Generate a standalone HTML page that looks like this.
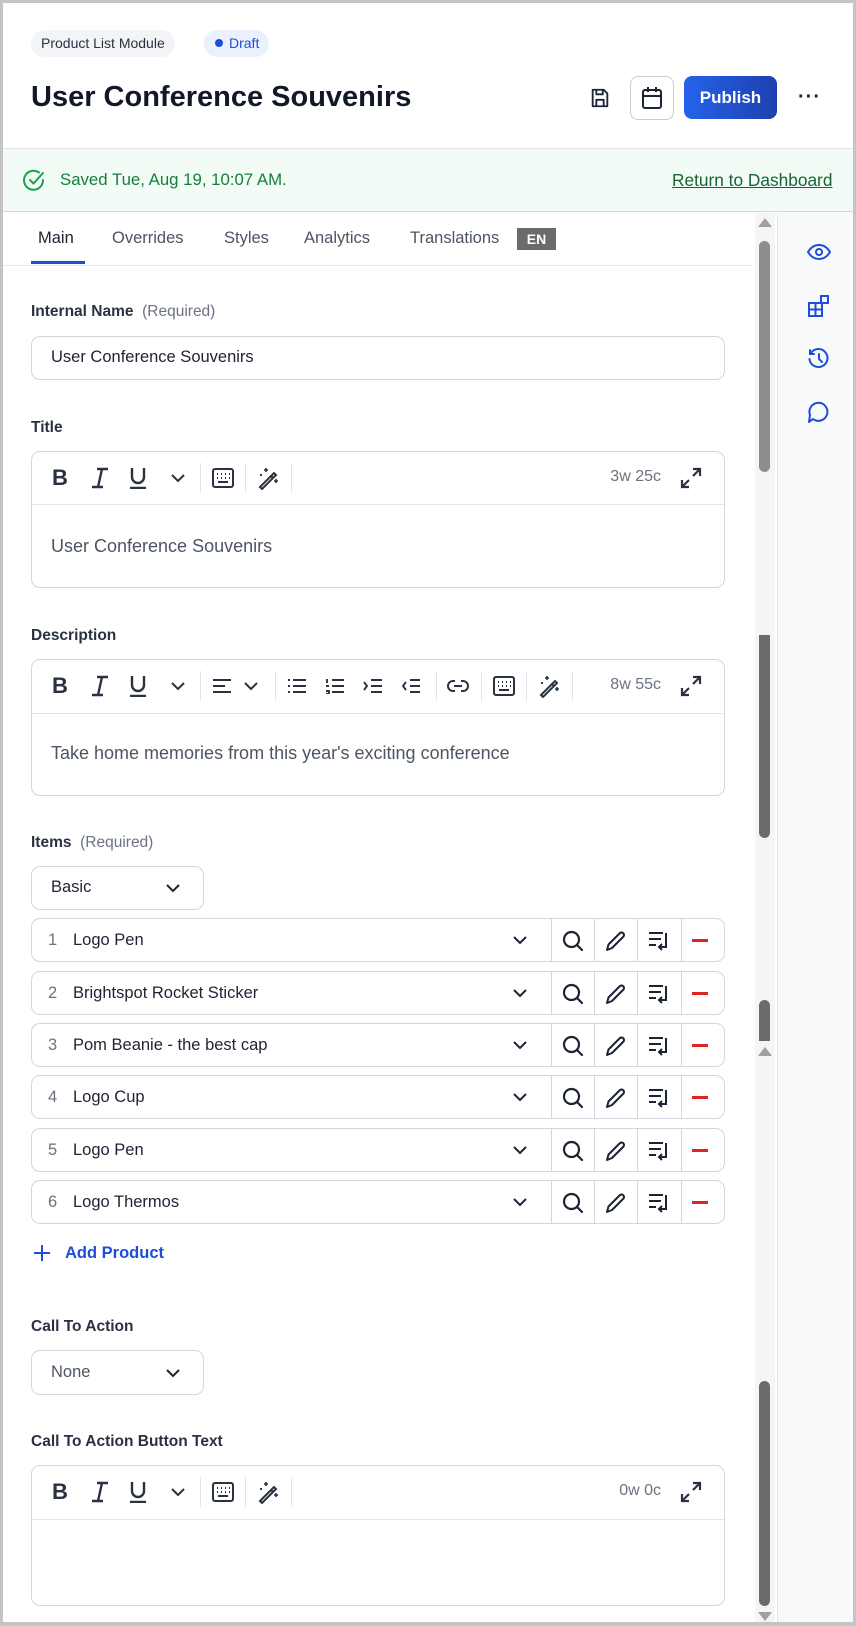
<!DOCTYPE html>
<html><head><meta charset="utf-8"><style>
*{box-sizing:border-box;margin:0;padding:0}
body{width:856px;height:1626px;overflow:hidden;font-family:"Liberation Sans",sans-serif;color:#1c2333;background:#fff;position:relative}
.frame{position:absolute;inset:0;border:3px solid #c4c4c4;border-bottom-width:4px;pointer-events:none;z-index:10}
.a{position:absolute}
.pill{position:absolute;top:30px;height:27px;border-radius:14px;font-size:14px;line-height:27px;padding:0 10px}
.lbl{position:absolute;left:31px;font-size:15.5px;font-weight:bold;color:#2a3242}
.lbl span{font-weight:normal;color:#6b7280}
.box{position:absolute;left:31px;width:694px;border:1px solid #d3d6de;border-radius:9px;background:#fff}
.tb{position:absolute;left:0;right:0;top:0;border-bottom:1px solid #e2e4ea}
.sep{position:absolute;width:1px;background:#e2e4ea}
.row{position:absolute;left:31px;width:694px;height:44px;border:1px solid #d3d6de;border-radius:9px}
.row .n{position:absolute;left:16px;top:12px;font-size:16.5px;color:#6b7280}
.row .t{position:absolute;left:41px;top:12px;font-size:16.5px}
.row .s{position:absolute;top:0;bottom:0;width:1px;background:#d3d6de}
.sb{position:absolute;left:759px;width:11px;border-radius:6px}
</style></head><body>
<div class="frame"></div>
<div class="pill" style="left:31px;background:#f3f4f7;color:#2a3242">Product List Module</div>
<div class="pill" style="left:204px;background:#eaf0fd;color:#1d4ed8;padding-left:11px"><span style="display:inline-block;width:8px;height:8px;border-radius:4px;background:#1d4ed8;margin-right:6px;vertical-align:1px"></span>Draft</div>
<div class="a" style="left:31px;top:81px;font-size:29px;font-weight:bold;color:#111827">User Conference Souvenirs</div>
<svg class="a" style="left:589px;top:87px" width="22" height="22" viewBox="0 0 24 24" fill="none" stroke="#1c2333" stroke-width="2" stroke-linejoin="round"><path d="M4 3h12l4 4v14H4z"/><path d="M8 3v5h7V3M8 21v-7h8v7"/></svg>
<div class="a" style="left:630px;top:76px;width:44px;height:44px;border:1px solid #c9ccd4;border-radius:8px"></div>
<svg class="a" style="left:641px;top:86px" width="22" height="24" viewBox="0 0 22 24" fill="none" stroke="#1c2333" stroke-width="2"><rect x="2" y="4" width="18" height="18" rx="2"/><path d="M2 10h18M7 1v5M15 1v5"/></svg>
<div class="a" style="left:684px;top:76px;width:93px;height:43px;border-radius:8px;background:linear-gradient(90deg,#2563eb,#1e40af);color:#fff;font-weight:bold;font-size:17px;text-align:center;line-height:43px">Publish</div>
<div class="a" style="left:798px;top:86px;font-size:20px;font-weight:bold;letter-spacing:1px">···</div>
<div class="a" style="left:3px;right:3px;top:148px;height:64px;background:#f2fbf6;border-top:1px solid #e3e6ea;border-bottom:1px solid #b8e6c8"></div>
<svg class="a" style="left:22px;top:169px" width="24" height="24" viewBox="0 0 24 24" fill="none" stroke="#16a34a" stroke-width="2" stroke-linecap="round"><path d="M21 11a9.5 9.5 0 1 1-4-7.5"/><path d="M8 11l3.5 3.5L21 4"/></svg>
<div class="a" style="left:60px;top:170px;font-size:16.8px;color:#15803d">Saved Tue, Aug 19, 10:07 AM.</div>
<div class="a" style="left:672px;top:170px;font-size:17.3px;color:#166534;text-decoration:underline">Return to Dashboard</div>
<div class="a" style="left:777px;top:213px;width:76px;height:1410px;background:#f8f9fb;border-left:1px solid #e5e7eb"></div>
<svg class="a" style="left:807px;top:242px" width="24" height="20" viewBox="0 0 24 20" fill="none" stroke="#1d4ed8" stroke-width="2"><path d="M1 10c3-5 7-7 11-7s8 2 11 7c-3 5-7 7-11 7S4 15 1 10z"/><circle cx="12" cy="10" r="3"/></svg>
<svg class="a" style="left:808px;top:295px" width="22" height="22" viewBox="0 0 22 22" fill="none" stroke="#1d4ed8" stroke-width="2"><rect x="1" y="8" width="13" height="13"/><path d="M7.5 8v13M1 14.5h13"/><rect x="13" y="1" width="7" height="7"/></svg>
<svg class="a" style="left:808px;top:348px" width="22" height="22" viewBox="0 0 22 22" fill="none" stroke="#1d4ed8" stroke-width="2" stroke-linecap="round"><path d="M3 5a9 9 0 1 1-1.5 6"/><path d="M2 2v4h4M11 6v5l3 3"/></svg>
<svg class="a" style="left:808px;top:401px" width="22" height="22" viewBox="0 0 22 22" fill="none" stroke="#1d4ed8" stroke-width="2" stroke-linejoin="round"><path d="M5 18a9 9 0 1 0-3-4l-1 7z"/></svg>
<div class="a" style="left:3px;top:265px;width:750px;height:1px;background:#e5e7eb"></div>
<div class="a" style="top:229px;left:38px;font-size:16.5px;color:#1c2333">Main</div>
<div class="a" style="left:31px;top:261px;width:54px;height:3px;background:#1d4ed8"></div>
<div class="a" style="top:229px;left:112px;font-size:16.5px;color:#4b5563">Overrides</div>
<div class="a" style="top:229px;left:224px;font-size:16.5px;color:#4b5563">Styles</div>
<div class="a" style="top:229px;left:304px;font-size:16.5px;color:#4b5563">Analytics</div>
<div class="a" style="top:229px;left:410px;font-size:16.5px;color:#4b5563">Translations</div>
<div class="a" style="top:228px;left:517px;width:39px;height:22px;background:#6b6b6b;color:#fff;font-size:14px;font-weight:bold;text-align:center;line-height:22px">EN</div>
<div class="a" style="left:755px;top:213px;width:20px;height:1410px;background:#f5f5f5"></div>
<div class="a" style="left:758px;top:218px;border:7px solid transparent;border-bottom:9px solid #a0a0a0;border-top:0"></div>
<div class="sb" style="top:241px;height:231px;background:#8d8d8d"></div>
<div class="sb" style="top:635px;height:203px;background:#6b6b6b;border-radius:0 0 6px 6px"></div>
<div class="sb" style="top:1000px;height:41px;background:#6b6b6b;border-radius:6px 6px 0 0"></div>
<div class="a" style="left:758px;top:1047px;border:7px solid transparent;border-bottom:9px solid #a0a0a0;border-top:0"></div>
<div class="sb" style="top:1381px;height:225px;background:#6b6b6b"></div>
<div class="a" style="left:758px;top:1612px;border:7px solid transparent;border-top:9px solid #a0a0a0;border-bottom:0"></div>

<div class="lbl" style="top:303px">Internal Name <span>&nbsp;(Required)</span></div>
<div class="box" style="top:336px;height:44px"><div class="a" style="left:19px;top:11px;font-size:16.5px">User Conference Souvenirs</div></div>

<div class="lbl" style="top:419px">Title</div>
<div class="box" style="top:451px;height:137px"><div class="tb" style="height:53px"></div>
<div class="a" style="left:19px;top:84px;font-size:18px;color:#4b5563">User Conference Souvenirs</div>
</div>

<div class="lbl" style="top:627px">Description</div>
<div class="box" style="top:659px;height:137px"><div class="tb" style="height:54px"></div>
<div class="a" style="left:19px;top:83px;font-size:18px;color:#4b5563">Take home memories from this year's exciting conference</div></div>

<div class="lbl" style="top:834px">Items <span>&nbsp;(Required)</span></div>
<div class="a" style="left:31px;top:866px;width:173px;height:44px;border:1px solid #d3d6de;border-radius:9px"><div class="a" style="left:19px;top:11px;font-size:16.5px">Basic</div><svg class="a" style="left:133px;top:15px" width="16" height="12" viewBox="0 0 16 12" fill="none" stroke="#1c2333" stroke-width="2"><path d="M2 3l6 6 6-6"/></svg></div>

<div class="lbl" style="top:1318px">Call To Action</div>
<div class="a" style="left:31px;top:1350px;width:173px;height:45px;border:1px solid #d3d6de;border-radius:9px"><div class="a" style="left:19px;top:12px;font-size:16.5px;color:#4b5563">None</div><svg class="a" style="left:133px;top:16px" width="16" height="12" viewBox="0 0 16 12" fill="none" stroke="#1c2333" stroke-width="2"><path d="M2 3l6 6 6-6"/></svg></div>

<div class="lbl" style="top:1433px">Call To Action Button Text</div>
<div class="box" style="top:1465px;height:141px"><div class="tb" style="height:54px"></div></div>

<div class="a" style="left:33px;top:1244px"><svg width="18" height="18" viewBox="0 0 18 18" stroke="#1d4ed8" stroke-width="2"><path d="M9 1v16M1 9h16"/></svg></div>
<div class="a" style="left:65px;top:1244px;font-size:16.5px;font-weight:bold;color:#1d4ed8">Add Product</div>

<script>
function tool(top,full,count){
 var h='';
 var y=top;
 h+='<div class="a" style="left:52px;top:'+(y-13)+'px;font-size:22px;font-weight:bold;color:#2a3242">B</div>';
 h+='<svg class="a" style="left:90px;top:'+(y-11)+'px" width="20" height="22" viewBox="0 0 20 22" fill="none" stroke="#2a3242" stroke-width="2.4"><path d="M7 2h11M2 20h11M12 2L8 20"/></svg>';
 h+='<svg class="a" style="left:128px;top:'+(y-11)+'px" width="20" height="22" viewBox="0 0 20 22" fill="none" stroke="#2a3242" stroke-width="2.4"><path d="M4 1v9a6 6 0 0 0 12 0V1M2 21h16"/></svg>';
 h+='<svg class="a" style="left:171px;top:'+(y-4)+'px" width="14" height="9" viewBox="0 0 14 9" fill="none" stroke="#2a3242" stroke-width="2"><path d="M1 1l6 6 6-6"/></svg>';
 var x=200;
 h+='<div class="sep" style="left:'+x+'px;top:'+(y-15)+'px;height:30px"></div>';
 x+=12;
 if(full){
  h+='<svg class="a" style="left:212px;top:'+(y-8)+'px" width="20" height="16" viewBox="0 0 20 16" fill="none" stroke="#2a3242" stroke-width="2"><path d="M1 2h18M1 8h12M1 14h18"/></svg>';
  h+='<svg class="a" style="left:244px;top:'+(y-4)+'px" width="14" height="9" viewBox="0 0 14 9" fill="none" stroke="#2a3242" stroke-width="2"><path d="M1 1l6 6 6-6"/></svg>';
  h+='<div class="sep" style="left:275px;top:'+(y-15)+'px;height:30px"></div>';
  var lists=['M6 2h13M6 8h13M6 14h13M1 2h2M1 8h2M1 14h2','M7 2h12M7 8h12M7 14h12M2 1v4M1 8h3M1 13h3v3H1','M8 2h11M8 8h11M8 14h11M1 4l3 4-3 4','M9 2h10M9 8h10M9 14h10M5 4L2 8l3 4'];
  [287,325,363,401].forEach(function(px,i){h+='<svg class="a" style="left:'+px+'px;top:'+(y-8)+'px" width="20" height="16" viewBox="0 0 20 16" fill="none" stroke="#2a3242" stroke-width="1.9"><path d="'+lists[i]+'"/></svg>';});
  h+='<div class="sep" style="left:436px;top:'+(y-15)+'px;height:30px"></div>';
  h+='<svg class="a" style="left:447px;top:'+(y-7)+'px" width="22" height="14" viewBox="0 0 22 14" fill="none" stroke="#2a3242" stroke-width="2"><path d="M8 2H6a5 5 0 0 0 0 10h2M14 2h2a5 5 0 0 1 0 10h-2M7 7h8"/></svg>';
  h+='<div class="sep" style="left:481px;top:'+(y-15)+'px;height:30px"></div>';
  x=493;
 }
 h+='<svg class="a" style="left:'+x+'px;top:'+(y-10)+'px" width="22" height="20" viewBox="0 0 22 20" fill="none" stroke="#2a3242" stroke-width="2"><rect x="1" y="1" width="20" height="18" rx="2"/><path d="M5 6h1M9 6h1M13 6h1M17 6h1M5 10h1M9 10h1M13 10h1M17 10h1M6 14h10"/></svg>';
 h+='<div class="sep" style="left:'+(x+33)+'px;top:'+(y-15)+'px;height:30px"></div>';
 h+='<svg class="a" style="left:'+(x+45)+'px;top:'+(y-12)+'px" width="24" height="24" viewBox="0 0 24 24" fill="none" stroke="#2a3242" stroke-width="2"><path d="M3 21L17 7l2 2L5 23zM14 10l2 2"/><path d="M9 2v4M7 4h4M19 13v4M17 15h4M4 8v2M3 9h2" stroke-width="1.6"/></svg>';
 h+='<div class="sep" style="left:'+(x+79)+'px;top:'+(y-15)+'px;height:30px"></div>';
 h+='<div class="a" style="right:195px;top:'+(y-10)+'px;font-size:16px;color:#6b7280;text-align:right">'+count+'</div>';
 h+='<svg class="a" style="left:680px;top:'+(y-11)+'px" width="22" height="22" viewBox="0 0 22 22" fill="none" stroke="#2a3242" stroke-width="2.2"><path d="M13 2h7v7M20 2l-7 7M9 20H2v-7M2 20l7-7"/></svg>';
 return h;
}
var out='';
out+=tool(478,false,'3w 25c');
out+=tool(686,true,'8w 55c');
out+=tool(1492,false,'0w 0c');
var items=['Logo Pen','Brightspot Rocket Sticker','Pom Beanie - the best cap','Logo Cup','Logo Pen','Logo Thermos'];
var tops=[918,971,1023,1075,1128,1180];
items.forEach(function(t,i){
 var y=tops[i];
 out+='<div class="row" style="top:'+y+'px"><div class="n">'+(i+1)+'</div><div class="t">'+t+'</div>'+
 '<svg class="a" style="left:480px;top:15px" width="16" height="12" viewBox="0 0 16 12" fill="none" stroke="#1c2333" stroke-width="2"><path d="M2 3l6 6 6-6"/></svg>'+
 '<div class="s" style="left:519px"></div><div class="s" style="left:562px"></div><div class="s" style="left:605px"></div><div class="s" style="left:649px"></div>'+
 '<svg class="a" style="left:529px;top:10px" width="24" height="24" viewBox="0 0 24 24" fill="none" stroke="#1c2333" stroke-width="2.2" stroke-linecap="round"><circle cx="10.5" cy="10.5" r="7.5"/><path d="M16 16l5 5"/></svg>'+
 '<svg class="a" style="left:572px;top:10px" width="24" height="24" viewBox="0 0 24 24" fill="none" stroke="#1c2333" stroke-width="2" stroke-linejoin="round"><path d="M3 21l1.5-5.5L16 4a2.5 2.5 0 0 1 3.5 3.5L8 19z"/></svg>'+
 '<svg class="a" style="left:616px;top:11px" width="22" height="22" viewBox="0 0 22 22" fill="none" stroke="#1c2333" stroke-width="2"><path d="M1 3h14M1 9h12M1 15h7M18 3v14h-6M14 14l-3 3 3 3"/></svg>'+
 '<div class="a" style="left:660px;top:20px;width:16px;height:2.5px;background:#dc2626"></div></div>';
});
document.body.insertAdjacentHTML('beforeend',out);
</script>
</body></html>
